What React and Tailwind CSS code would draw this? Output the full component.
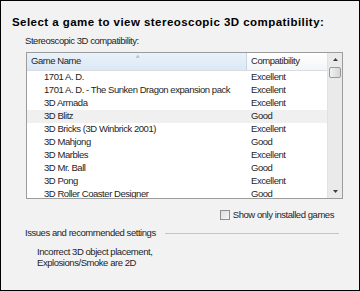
import React from 'react';

const games = [
  ['1701 A. D.', 'Excellent'],
  ['1701 A. D. - The Sunken Dragon expansion pack', 'Excellent'],
  ['3D Armada', 'Excellent'],
  ['3D Blitz', 'Good'],
  ['3D Bricks (3D Winbrick 2001)', 'Excellent'],
  ['3D Mahjong', 'Good'],
  ['3D Marbles', 'Excellent'],
  ['3D Mr. Ball', 'Good'],
  ['3D Pong', 'Excellent'],
  ['3D Roller Coaster Designer', 'Good'],
];

const App = () => {
  return (
    <div className="w-[360px] h-[291px] border border-black bg-[#f2f2f2] text-[#1e1e1e] font-['Liberation_Sans',Arial,sans-serif] text-[9.5px] tracking-[-0.45px] overflow-hidden">
      <div className="pl-[11px] pt-[15px] font-bold text-[11.5px] tracking-[0.45px] leading-[13px] text-black whitespace-nowrap">
        Select a game to view stereoscopic 3D compatibility:
      </div>
      <div className="pl-[24px] pt-[6px] leading-[11px]">Stereoscopic 3D compatibility:</div>

      {/* list view */}
      <div className="ml-[25px] mt-[6px] w-[317px] h-[147px] border border-[#9c9c9c] bg-white flex overflow-hidden">
        <div className="flex-1 flex flex-col overflow-hidden">
          <div className="flex h-[18px] shrink-0 border-b border-[#d8dde3]">
            <div className="relative w-[220px] bg-gradient-to-b from-[#e9f2fb] to-[#dbe8f5] border-r border-[#c8d4e0] flex items-center pl-[4px]">
              Game Name
              <span className="absolute left-[109px] top-[1px] text-[7px] leading-[7px] text-[#6b7a8a]">^</span>
            </div>
            <div className="flex-1 bg-gradient-to-b from-white to-[#f4f5f7] flex items-center pl-[4px]">Compatibility</div>
          </div>
          {games.map(([name, comp], i) => (
            <div key={name} className={`flex h-[13px] shrink-0 items-center ${i === 3 ? 'bg-[#f0f0f0]' : ''}`}>
              <div className="w-[220px] pl-[17px] whitespace-nowrap">{name}</div>
              <div className="pl-[4px]">{comp}</div>
            </div>
          ))}
        </div>
        {/* scrollbar */}
        <div className="w-[15px] bg-[#eaeaea] border-l border-[#e2e2e2] flex flex-col items-center">
          <div className="h-[13px] w-full flex items-center justify-center">
            <svg width="5" height="3" viewBox="0 0 5 3"><path d="M0 3 L2.5 0 L5 3 Z" fill="#3c3c3c" /></svg>
          </div>
          <div className="w-[12px] h-[11px] mt-[1px] border border-[#9a9a9a] rounded-[2px] bg-gradient-to-r from-[#f2f2f2] to-[#d6d6d6]" />
          <div className="flex-1" />
          <div className="h-[13px] w-full flex items-center justify-center">
            <svg width="5" height="3" viewBox="0 0 5 3"><path d="M0 0 L5 0 L2.5 3 Z" fill="#3c3c3c" /></svg>
          </div>
        </div>
      </div>

      <div className="flex justify-end items-center pr-[25px] mt-[10px] h-[12px]">
        <div className="w-[10px] h-[10px] border border-[#8e8f8f] bg-gradient-to-br from-[#dcdcdc] to-[#f6f6f6] mr-[3px]" />
        <span>Show only installed games</span>
      </div>

      <div className="flex items-center mt-[6px] pl-[24px] pr-[20px] h-[12px]">
        <span className="whitespace-nowrap">Issues and recommended settings</span>
        <div className="flex-1 h-px bg-[#c5c5c5] ml-[9px]" />
      </div>

      <div className="pl-[36px] pt-[7px] leading-[11px]">
        <div>Incorrect 3D object placement,</div>
        <div>Explosions/Smoke are 2D</div>
      </div>
    </div>
  );
};

export default App;
